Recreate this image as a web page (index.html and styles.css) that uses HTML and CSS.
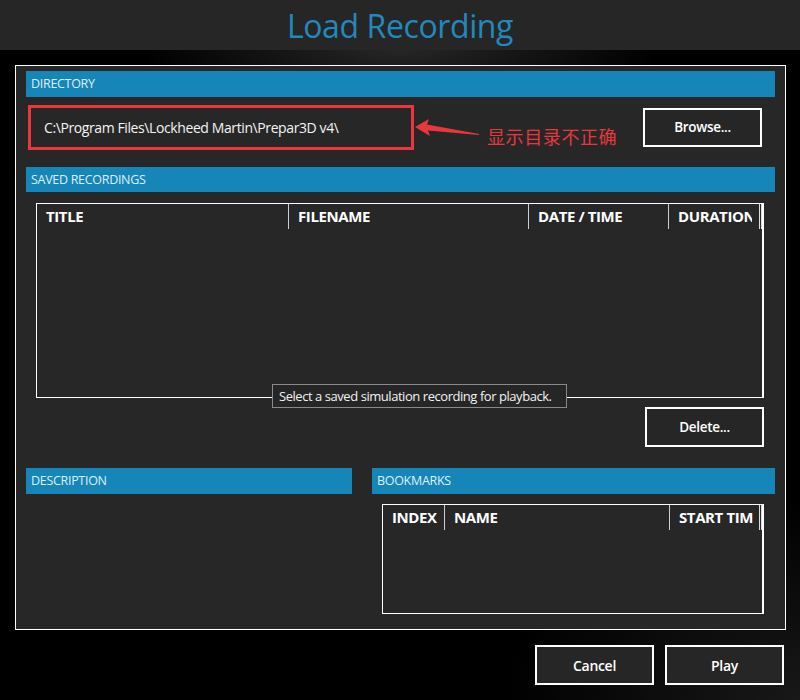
FILE: index.html
```html
<!DOCTYPE html>
<html>
<head>
<meta charset="utf-8">
<link rel="stylesheet" href="styles.css">
</head>
<body>
<header class="titlebar"><h1 class="title">Load Recording</h1></header>
<main class="stage">
  <section class="panel">
    <div class="bar">DIRECTORY</div>
    <div class="dir-row">
      <div class="dir-field">C:\Program Files\Lockheed Martin\Prepar3D v4\</div>
      <svg class="arrow" width="68" height="20" viewBox="0 0 68 20">
        <path d="M1 9 L15 1 L13 6.5 L65 16 L65 17 L14 12.5 L16 18 Z" fill="#e8383d"/>
      </svg>
      <span class="note">显示目录不正确</span>
      <button class="btn btn-browse">Browse...</button>
    </div>
    <div class="bar bar-gap">SAVED RECORDINGS</div>
    <div class="table rec-table">
      <div class="thead">
        <div class="th c-title">TITLE</div>
        <div class="th c-file">FILENAME</div>
        <div class="th c-date">DATE / TIME</div>
        <div class="th c-dur">DURATION</div>
        <div class="th-end"></div>
      </div>
      <div class="tooltip">Select a saved simulation recording for playback.</div>
    </div>
    <div class="action-row"><button class="btn btn-delete">Delete...</button></div>
    <div class="lower">
      <div class="desc-col">
        <div class="bar">DESCRIPTION</div>
      </div>
      <div class="bm-col">
        <div class="bar">BOOKMARKS</div>
        <div class="table bm-table">
          <div class="thead">
            <div class="th c-index">INDEX</div>
            <div class="th c-name">NAME</div>
            <div class="th c-start">START TIME</div>
            <div class="th-end"></div>
          </div>
        </div>
      </div>
    </div>
  </section>
  <div class="footer">
    <button class="btn btn-foot">Cancel</button>
    <button class="btn btn-foot">Play</button>
  </div>
</main>
</body>
</html>
```

FILE: styles.css
```css
* { box-sizing: border-box; }
html, body { margin: 0; padding: 0; }
body {
  width: 800px;
  height: 700px;
  overflow: hidden;
  background: #000;
  font-family: "Open Sans", "Noto Sans", sans-serif;
  color: #fff;
}
.titlebar {
  height: 50px;
  background: #262626;
  display: flex;
  justify-content: center;
  align-items: center;
}
.title {
  margin: 0;
  font-weight: 400;
  font-size: 32px;
  color: #2388bb;
  letter-spacing: -0.4px;
  line-height: 1;
  padding-top: 2px;
}
.stage {
  height: 650px;
  padding: 15px 15px 0 15px;
  background:
    radial-gradient(ellipse 260px 60px at 400px 0px, rgba(70,70,70,0.55), rgba(0,0,0,0) 100%),
    radial-gradient(ellipse 300px 200px at 800px 650px, rgba(40,40,40,0.6), rgba(0,0,0,0) 100%),
    #000;
}
.panel {
  position: relative;
  width: 771px;
  height: 565px;
  border: 1px solid #fff;
  background: #272727;
  padding: 5px 10px 0 10px;
}
.bar {
  height: 26px;
  background: #1685b8;
  color: #dff0f8;
  font-size: 12.5px;
  line-height: 26px;
  padding-left: 5px;
  letter-spacing: -0.3px;
}
.bar-gap { margin-top: 20px; height: 25px; line-height: 25px; }
.dir-row {
  display: flex;
  align-items: center;
  margin-top: 10px;
  height: 40px;
}
.dir-field {
  margin-left: 2px;
  width: 386px;
  height: 45px;
  border: 3px solid #e8383d;
  font-size: 14px;
  line-height: 39px;
  padding-left: 13px;
  color: #f4f4f4;
  letter-spacing: -0.4px;
  white-space: nowrap;
}
.arrow { margin-left: 0; align-self: flex-start; margin-top: 11px; }
.note {
  margin-left: 5px;
  margin-top: 17px;
  color: #e8383d;
  font-family: "Noto Sans CJK SC", sans-serif;
  font-size: 18px;
  letter-spacing: 0.6px;
}
.btn {
  background: #262626;
  border: 2px solid #fff;
  color: #fff;
  font-family: "Open Sans", "Noto Sans", sans-serif;
  font-weight: 600;
  font-size: 13.5px;
  letter-spacing: -0.3px;
  padding: 0;
  cursor: default;
}
.btn-browse {
  margin-left: auto;
  margin-right: 13px;
  width: 119px;
  height: 39px;
}
.table {
  position: relative;
  border: 1px solid #fff;
  border-right-width: 2px;
}
.rec-table {
  margin: 11px 11px 0 10px;
  height: 195px;
}
.thead {
  display: flex;
  height: 25px;
}
.th {
  font-weight: 700;
  font-size: 15px;
  letter-spacing: -0.4px;
  line-height: 25px;
  padding-left: 9px;
  white-space: nowrap;
  overflow: hidden;
  border-right: 1px solid #cfcfcf;
}
.c-title { width: 252px; }
.c-file { width: 240px; }
.c-date { width: 140px; }
.c-dur { width: 83px; border-right: none; }
.th-end {
  width: 3px;
  border-left: 1px solid #ddd;
  border-right: 1px solid #ddd;
  height: 25px;
  margin-left: auto;
}
.tooltip {
  position: absolute;
  left: 235px;
  top: 180px;
  width: 295px;
  height: 24px;
  border: 1px solid #8a8a8a;
  background: #262626;
  font-size: 13px;
  letter-spacing: -0.45px;
  line-height: 22px;
  padding-left: 6px;
  white-space: nowrap;
  color: #f2f2f2;
}
.action-row {
  display: flex;
  justify-content: flex-end;
  margin-top: 9px;
  padding-right: 11px;
}
.btn-delete { width: 119px; height: 40px; }
.lower {
  display: flex;
  gap: 20px;
  margin-top: 21px;
}
.desc-col { width: 326px; }
.bm-col { flex: 1; }
.bm-table {
  margin: 10px 11px 0 10px;
  height: 110px;
}
.c-index { width: 62px; }
.c-name { width: 225px; }
.c-start { width: 83px; border-right: none; }
.footer {
  display: flex;
  justify-content: flex-end;
  gap: 11px;
  margin-top: 15px;
  margin-right: 1px;
}
.btn-foot { width: 119px; height: 40px; font-size: 14px; }
```
